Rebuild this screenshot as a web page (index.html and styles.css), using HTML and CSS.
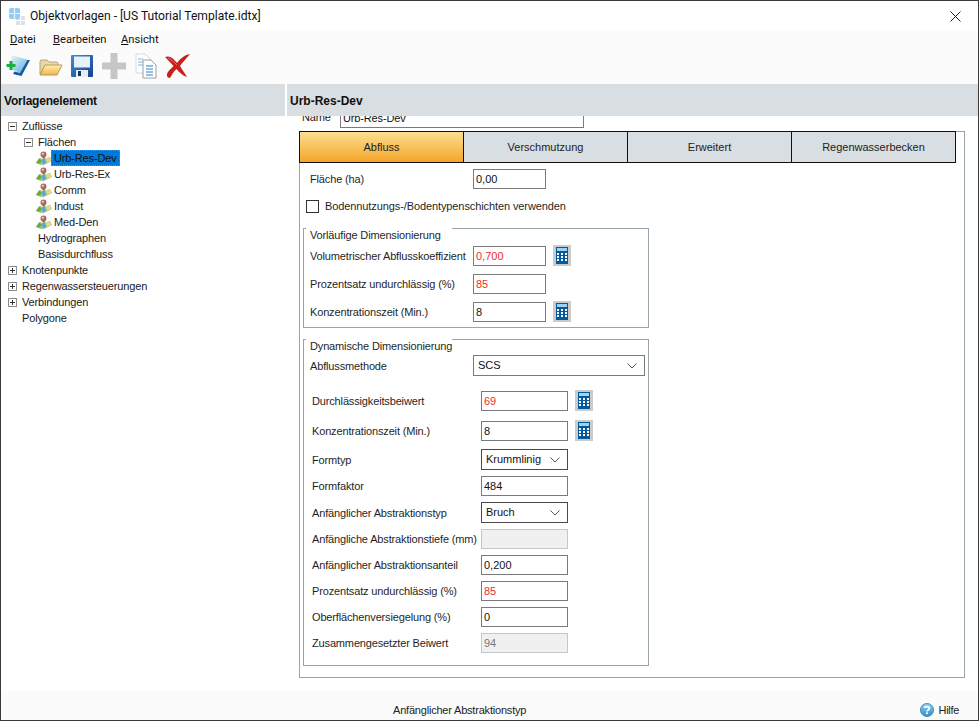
FILE: index.html
```html
<!DOCTYPE html>
<html lang="de">
<head>
<meta charset="utf-8">
<title>Objektvorlagen</title>
<link rel="stylesheet" href="styles.css">
</head>
<body>
<svg class="defs" width="0" height="0">
  <symbol id="calc" viewBox="0 0 18 21">
    <rect width="18" height="21" fill="#cbcbcb"/>
    <rect x="3" y="2" width="12" height="17" fill="#04589c"/>
    <rect x="4" y="3" width="10" height="3" fill="#9ad2ef"/>
    <g fill="#fff">
      <rect x="4" y="8" width="2" height="2"/><rect x="8" y="8" width="2" height="2"/><rect x="12" y="8" width="2" height="2"/>
      <rect x="4" y="11" width="2" height="2"/><rect x="8" y="11" width="2" height="2"/><rect x="12" y="11" width="2" height="2"/>
      <rect x="4" y="14" width="2" height="2"/><rect x="8" y="14" width="2" height="2"/><rect x="12" y="14" width="2" height="2"/>
    </g>
  </symbol>
  <symbol id="map" viewBox="0 0 16 16">
    <path d="M0 13 3 8l5 1 6-2 2 4-6 3-5 1z" fill="#a7bf7c"/>
    <path d="M9 8.500 14 7l2 4-5 2.500z" fill="#e2d68f"/>
    <path d="M0 13 3 9l3 1-2 3.500z" fill="#6fa548"/>
    <circle cx="7.500" cy="4.500" r="3" fill="#b0675c"/>
    <circle cx="6.800" cy="3.800" r="1.200" fill="#e2bdb2"/>
    <path d="M6 7h3L8 9z" fill="#94544c"/>
    <path d="M7 8.500h2.500l-.5 2.500h1.800L7 16l.5-3.500H5.800z" fill="#41aee3"/>
  </symbol>
  <symbol id="chev" viewBox="0 0 10 6">
    <path d="M.5.5 5 5 9.500.5" fill="none" stroke="#555"/>
  </symbol>
</svg>
<div class="window">
  <header class="titlebar">
    <svg class="appicon" width="17" height="17" viewBox="0 0 17 17">
      <rect x="8" y="8" width="9" height="9" rx="1" fill="#dde0e3"/>
      <path d="M12.500 8v9M8 12.500h9" stroke="#fff"/>
      <rect x="1" y="0" width="11" height="11" rx="2" fill="#93cdf0"/>
      <path d="M6.500 0v11M1 5.500h11" stroke="#e4f3fb" stroke-width="1.200"/>
    </svg>
    <span class="title-text">Objektvorlagen - [US Tutorial Template.idtx]</span>
    <svg class="close" width="11" height="11" viewBox="0 0 11 11"><path d="M.5.500l10 10M10.500.500l-10 10" stroke="#222" fill="none"/></svg>
  </header>
  <nav class="menubar">
    <span class="menu-item m1"><u>D</u>atei</span>
    <span class="menu-item m2"><u>B</u>earbeiten</span>
    <span class="menu-item"><u>A</u>nsicht</span>
  </nav>
  <div class="toolbar">
    <svg class="tool tool-new" width="26" height="24" viewBox="0 0 26 24">
      <defs><linearGradient id="pg" x1="0" y1="0" x2="1" y2="1"><stop offset="0" stop-color="#eef7fc"/><stop offset="1" stop-color="#4fa8dc"/></linearGradient></defs>
      <path d="M6 1 24 6 15 19 6 15z" fill="url(#pg)"/>
      <path d="M25 6 16.500 22 8 20 9.500 17.500 15 19 22.500 6z" fill="#125a9e"/>
      <path d="M4.500 7h3v3h3v3h-3v3h-3v-3h-3v-3h3z" fill="#17b13c"/>
    </svg>
    <svg class="tool tool-folder" width="24" height="18" viewBox="0 0 24 18">
      <defs><linearGradient id="fd" x1="0" y1="0" x2="0" y2="1"><stop offset="0" stop-color="#fff1b5"/><stop offset="1" stop-color="#f2b544"/></linearGradient></defs>
      <path d="M1 16V3l1-1h6l2 2h8l1 1v3H6z" fill="#e9d7a6" stroke="#b9a67a"/>
      <path d="M1 17 6 7h17l-5 10z" fill="url(#fd)" stroke="#b99a5a"/>
    </svg>
    <svg class="tool tool-save" width="22" height="22" viewBox="0 0 22 22">
      <defs><linearGradient id="fl" x1="0" y1="0" x2="1" y2="1"><stop offset="0" stop-color="#3f8fd6"/><stop offset="1" stop-color="#143f8e"/></linearGradient></defs>
      <rect width="22" height="22" rx="1" fill="url(#fl)"/>
      <rect x="3" y="1.500" width="16" height="11" fill="#e6f1fa"/>
      <rect x="5" y="15" width="12" height="7" fill="#e8edf2"/>
      <rect x="7" y="16" width="3" height="5" fill="#16356f"/>
    </svg>
    <svg class="tool tool-plus" width="24" height="26" viewBox="0 0 24 26"><path d="M8.500 0h7v9.500H24v7h-8.500V26h-7v-9.500H0v-7h8.500z" fill="#c6c6c6"/></svg>
    <svg class="tool tool-copy" width="23" height="26" viewBox="0 0 23 26">
      <path d="M1 1h9l5 5v14H1z" fill="#fff" stroke="#d6d9dc"/>
      <path d="M3 6h5M3 9h5M3 12h5" stroke="#7fb2dc"/>
      <path d="M8 7h8l5 5v13H8z" fill="#fff" stroke="#9aa0a6"/>
      <path d="M11 13h7M11 16h7M11 19h7M11 22h7" stroke="#2f7cc4"/>
    </svg>
    <svg class="tool tool-del" width="25" height="24" viewBox="0 0 25 24">
      <path d="M0 3C5 1 9 5 12 9 15 5 19 1 25 0 21 5 17 9 15 12 17 16 20 19 22 23 18 22 14 18 11.500 15 8 18 7 21 5 24 2 24 1 21 3 18 4 16 7 14 8.500 12 6 9 3 6 0 3Z" fill="#c8211c"/>
      <path d="M3 4C6 5 9 8 12 11" stroke="#ee6a5f" fill="none"/>
    </svg>
  </div>
  <div class="main">
    <aside class="left">
      <h2 class="section-head tight">Vorlagenelement</h2>
      <ul class="tree">
        <li class="node l1"><span class="box minus"></span>Zuflüsse</li>
        <li class="node l2"><span class="box minus"></span>Flächen</li>
        <li class="node l3"><svg class="mapicon" width="16" height="16"><use href="#map"/></svg><span class="selected">Urb-Res-Dev</span></li>
        <li class="node l3"><svg class="mapicon" width="16" height="16"><use href="#map"/></svg><span class="leaf">Urb-Res-Ex</span></li>
        <li class="node l3"><svg class="mapicon" width="16" height="16"><use href="#map"/></svg><span class="leaf">Comm</span></li>
        <li class="node l3"><svg class="mapicon" width="16" height="16"><use href="#map"/></svg><span class="leaf">Indust</span></li>
        <li class="node l3"><svg class="mapicon" width="16" height="16"><use href="#map"/></svg><span class="leaf">Med-Den</span></li>
        <li class="node l2 nobox">Hydrographen</li>
        <li class="node l2 nobox">Basisdurchfluss</li>
        <li class="node l1"><span class="box plus"></span>Knotenpunkte</li>
        <li class="node l1"><span class="box plus"></span>Regenwassersteuerungen</li>
        <li class="node l1"><span class="box plus"></span>Verbindungen</li>
        <li class="node l1 nobox">Polygone</li>
      </ul>
    </aside>
    <section class="right">
      <h2 class="section-head">Urb-Res-Dev</h2>
      <div class="scroller">
        <div class="name-row">
          <span class="name-label">Name</span>
          <div class="field name-field">Urb-Res-Dev</div>
        </div>
        <div class="panel">
          <div class="tabs">
            <div class="tab active">Abfluss</div>
            <div class="tab">Verschmutzung</div>
            <div class="tab">Erweitert</div>
            <div class="tab">Regenwasserbecken</div>
          </div>
          <div class="row area-row">
            <span class="label w163">Fläche (ha)</span>
            <div class="field f73">0,00</div>
          </div>
          <label class="check-row"><span class="check"></span>Bodennutzungs-/Bodentypenschichten verwenden</label>

          <fieldset class="group group-a">
            <legend class="legend">Vorläufige Dimensionierung</legend>
            <div class="row">
              <span class="label w163">Volumetrischer Abflusskoeffizient</span>
              <div class="field f73 red">0,700</div>
              <svg class="calc" width="18" height="21"><use href="#calc"/></svg>
            </div>
            <div class="row">
              <span class="label w163">Prozentsatz undurchlässig (%)</span>
              <div class="field f73 red">85</div>
            </div>
            <div class="row">
              <span class="label w163">Konzentrationszeit (Min.)</span>
              <div class="field f73">8</div>
              <svg class="calc" width="18" height="21"><use href="#calc"/></svg>
            </div>
          </fieldset>

          <fieldset class="group group-b">
            <legend class="legend">Dynamische Dimensionierung</legend>
            <div class="row tall">
              <span class="label w163">Abflussmethode</span>
              <div class="field select f172">SCS<svg class="chev" width="10" height="6"><use href="#chev"/></svg></div>
            </div>
            <div class="rows">
              <div class="row">
                <span class="label w169">Durchlässigkeitsbeiwert</span>
                <div class="field f87 red">69</div>
                <svg class="calc" width="18" height="21"><use href="#calc"/></svg>
              </div>
              <div class="row mt10">
                <span class="label w169">Konzentrationszeit (Min.)</span>
                <div class="field f87">8</div>
                <svg class="calc" width="18" height="21"><use href="#calc"/></svg>
              </div>
              <div class="row tall mt8">
                <span class="label w169">Formtyp</span>
                <div class="field select f87 dark pad5">Krummlinig<svg class="chev" width="10" height="6"><use href="#chev"/></svg></div>
              </div>
              <div class="row">
                <span class="label w169">Formfaktor</span>
                <div class="field f87">484</div>
              </div>
              <div class="row tall">
                <span class="label w169">Anfänglicher Abstraktionstyp</span>
                <div class="field select f87 dark pad5">Bruch<svg class="chev" width="10" height="6"><use href="#chev"/></svg></div>
              </div>
              <div class="row">
                <span class="label w169">Anfängliche Abstraktionstiefe (mm)</span>
                <div class="field f87 disabled"></div>
              </div>
              <div class="row">
                <span class="label w169">Anfänglicher Abstraktionsanteil</span>
                <div class="field f87">0,200</div>
              </div>
              <div class="row">
                <span class="label w169">Prozentsatz undurchlässig (%)</span>
                <div class="field f87 red">85</div>
              </div>
              <div class="row">
                <span class="label w169">Oberflächenversiegelung (%)</span>
                <div class="field f87">0</div>
              </div>
              <div class="row">
                <span class="label w169">Zusammengesetzter Beiwert</span>
                <div class="field f87 disabled">94</div>
              </div>
            </div>
          </fieldset>
        </div>
      </div>
    </section>
  </div>
  <footer class="statusbar">
    <span class="status-text">Anfänglicher Abstraktionstyp</span>
    <span class="help">
      <svg width="14" height="14" viewBox="0 0 15 15">
        <defs><linearGradient id="hp" x1="0" y1="0" x2="0" y2="1"><stop offset="0" stop-color="#8fd0f0"/><stop offset="1" stop-color="#2f8fc8"/></linearGradient></defs>
        <circle cx="7.500" cy="7.500" r="7" fill="url(#hp)" stroke="#3b8dbf"/>
        <path d="M4.800 5.500C5 3.500 10 3.300 10 5.800 10 7.500 7.500 7.300 7.500 9" fill="none" stroke="#fff" stroke-width="1.800"/>
        <rect x="6.500" y="10" width="2" height="2" fill="#fff"/>
      </svg>
      Hilfe
    </span>
  </footer>
</div>
</body>
</html>
```
FILE: styles.css
```css
* { box-sizing: border-box; }
html, body { margin: 0; padding: 0; }
body { background: #fff; font-family: "Liberation Sans", Arial, sans-serif; font-size: 11px; color: #1a1a1a; }
.defs { position: absolute; }

.window { width: 979px; height: 721px; display: flex; flex-direction: column; border: 1px solid #3a3a3a; overflow: hidden; background: #fff; }

.titlebar { height: 30px; flex: none; display: flex; align-items: center; padding: 0 17px 0 7px; background: #fff; }
.appicon { margin-right: 5px; }
.title-text { font-family: Roboto, sans-serif; font-size: 12.1px; flex: 1; color: #111; }
.menubar { height: 22px; flex: none; display: flex; align-items: center; background: #fbfbfb; padding: 0 0 5px 9px; font-family: Roboto, sans-serif; font-size: 11.2px; color: #111; }
.m1 { width: 43px; }
.m2 { width: 68px; }
.toolbar { height: 31px; flex: none; background: #fbfbfb; display: flex; align-items: center; padding: 0 0 5px 4px; }
.tool { flex: none; }
.tool-folder { margin-left: 8px; margin-top: 2px; }
.tool-save { margin-left: 8px; }
.tool-plus { margin-left: 9px; }
.tool-copy { margin-left: 9px; }
.tool-del { margin-left: 7px; }

.main { flex: 1; display: flex; min-height: 0; }
.left { width: 284px; flex: none; display: flex; flex-direction: column; }
.right { flex: 1; margin-left: 2px; display: flex; flex-direction: column; min-width: 0; }
.section-head { height: 32px; flex: none; margin: 0; background: #d9dee2; font-size: 12px; font-weight: bold; line-height: 34px; padding-left: 3px; color: #111; }
.tight { letter-spacing: -.2px; }

.tree { list-style: none; margin: 2px 0 0; padding: 0; letter-spacing: -.15px; }
.node { height: 16px; line-height: 16px; display: flex; align-items: center; white-space: nowrap; }
.l1 { padding-left: 7px; }
.l2 { padding-left: 23px; }
.l3 { padding-left: 35px; }
.l1.nobox { padding-left: 21px; }
.l2.nobox { padding-left: 37px; }
.box { width: 9px; height: 9px; border: 1px solid #8d8d8d; margin-right: 5px; position: relative; flex: none; background: #fff; }
.box::before { content: ""; position: absolute; left: 1px; top: 3px; width: 5px; height: 1px; background: #333; }
.plus::after { content: ""; position: absolute; left: 3px; top: 1px; width: 1px; height: 5px; background: #333; }
.mapicon { flex: none; }
.selected { background: #0078d7; color: #111; height: 16px; padding: 0 3px; outline: 1px dotted #b8860b; outline-offset: -1px; width: 69px; margin-left: -1px; }
.leaf { padding-left: 2px; }

.scroller { flex: 1; min-height: 0; padding-left: 12px; overflow: hidden; }
.name-row { height: 12px; margin-bottom: 3px; display: flex; align-items: flex-end; overflow: hidden; padding-left: 3px; letter-spacing: -.15px; }
.name-label { width: 38px; flex: none; line-height: 16px; height: 14px; align-self: flex-start; margin-top: -7px; }
.name-field { width: 244px; flex: none; }

.panel { width: 666px; height: 547px; border: 1px solid #9aa5ab; }
.tabs { width: 657px; height: 32px; margin: -1px 0 0 -1px; display: flex; border: 1px solid #111; background: #d9dee2; }
.tab { flex: 1; line-height: 30px; text-align: center; border-left: 1px solid #111; color: #222; }
.tab:first-child { border-left: 0; }
.tab.active { background: linear-gradient(#fbe08e, #f4a52a); }

.row { display: flex; align-items: flex-start; height: 20px; flex: none; }
.row.tall { height: 21px; }
.tall .label { line-height: 22px; }
.area-row { margin-top: 6px; padding-left: 10px; }
.label { flex: none; line-height: 20px; white-space: nowrap; color: #1f1f1f; letter-spacing: -.15px; }
.w163 { width: 163px; }
.w169 { width: 169px; }

.field { height: 20px; border: 1px solid #7a7a7a; background: #fff; line-height: 18px; padding-left: 2px; color: #111; flex: none; white-space: nowrap; }
.f73 { width: 73px; }
.f87 { width: 87px; }
.f172 { width: 172px; }
.field.red { color: #f22d2d; }
.field.disabled { background: #f0f0f0; border-color: #c6c6c6; color: #777; }
.select { height: 21px; position: relative; padding-left: 4px; line-height: 19px; }
.select.dark { border-color: #4a4a4a; }
.chev { position: absolute; right: 7px; top: 7px; }
.calc { flex: none; margin: -1px 0 0 7px; display: block; }

.check-row { display: flex; align-items: center; height: 14px; margin: 10px 0 0 6px; color: #1f1f1f; letter-spacing: -.1px; }
.check { width: 13px; height: 13px; border: 1px solid #333; margin-right: 6px; background: #fff; flex: none; }

.group { border: 1px solid #9aa5ab; margin: 0 0 0 3px; padding: 0; width: 346px; position: relative; min-width: 0; }
.group-a { height: 100px; margin-top: 15px; padding: 17px 0 0 6px; display: flex; flex-direction: column; gap: 8px; }
.group-b { height: 327px; margin-top: 11px; padding: 15px 0 0 6px; }
.legend { display: block; position: absolute; left: 2px; top: -1px; background: #fff; padding: 0 0 0 4px; height: 15px; line-height: 14px; width: 146px; white-space: nowrap; color: #1f1f1f; letter-spacing: -.15px; }
.rows { display: flex; flex-direction: column; gap: 6px; margin-top: 15px; padding-left: 2px; }
.rows .mt10 { margin-top: 4px; }
.rows .mt8 { margin-top: 2px; }

.statusbar { height: 29px; flex: none; background: #fbfbfb; display: flex; align-items: flex-end; padding-bottom: 2px; position: relative; }
.status-text { margin-left: 392px; line-height: 16px; color: #222; letter-spacing: -.2px; }
.help { position: absolute; right: 19px; bottom: 2px; display: flex; align-items: center; gap: 4px; line-height: 16px; color: #222; letter-spacing: -.3px; }
```
